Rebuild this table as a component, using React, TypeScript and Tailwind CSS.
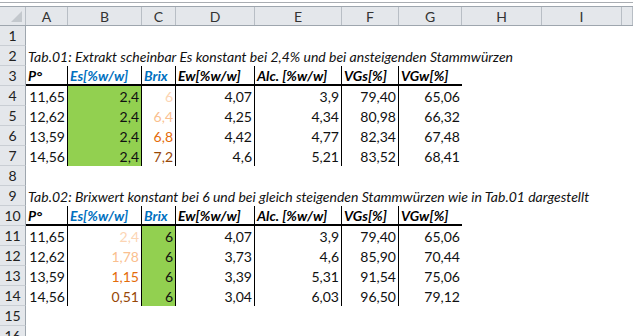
const grid = "grid grid-cols-[26px_42px_74px_34px_79px_87px_57px_63px_80px_80px_11px]";

const letters = ["A", "B", "C", "D", "E", "F", "G", "H", "I", ""];

const shades = ["text-[#fcd5b4]", "text-[#fabf8f]", "text-[#e46c0a]", "text-[#974706]"];

type Cell = { v: string; cls?: string; fill?: boolean };

const p = ["11,65", "12,62", "13,59", "14,56"];

const tab1: Cell[][] = [0, 1, 2, 3].map((i) => [
  { v: p[i] },
  { v: "2,4", fill: true },
  { v: ["6", "6,4", "6,8", "7,2"][i], cls: shades[i] },
  { v: ["4,07", "4,25", "4,42", "4,6"][i] },
  { v: ["3,9", "4,34", "4,77", "5,21"][i] },
  { v: ["79,40", "80,98", "82,34", "83,52"][i] },
  { v: ["65,06", "66,32", "67,48", "68,41"][i] },
]);

const tab2: Cell[][] = [0, 1, 2, 3].map((i) => [
  { v: p[i] },
  { v: ["2,4", "1,78", "1,15", "0,51"][i], cls: shades[i] },
  { v: "6", fill: true },
  { v: ["4,07", "3,73", "3,39", "3,04"][i] },
  { v: ["3,9", "4,6", "5,31", "6,03"][i] },
  { v: ["79,40", "85,90", "91,54", "96,50"][i] },
  { v: ["65,06", "70,44", "75,06", "79,12"][i] },
]);

const heads = [
  { v: "P°", cls: "text-black" },
  { v: "Es[%w/w]", cls: "text-[#0070c0]" },
  { v: "Brix", cls: "text-[#0070c0]" },
  { v: "Ew[%w/w]", cls: "text-black" },
  { v: "Alc. [%w/w]", cls: "text-black" },
  { v: "VGs[%]", cls: "text-black" },
  { v: "VGw[%]", cls: "text-black" },
];

const RowNum = ({ n }: { n: number }) => (
  <div className="h-[20px] bg-[#e4e7eb] border-b border-r border-b-[#c9ced4] border-r-[#9ea6ae] flex items-center justify-center text-[14px] text-[#222]">
    {n}
  </div>
);

const Empty = ({ n }: { n: number }) => (
  <div className={grid}>
    <RowNum n={n} />
    <div className="col-span-10 h-[20px]" />
  </div>
);

const Title = ({ n, text }: { n: number; text: string }) => (
  <div className={grid}>
    <RowNum n={n} />
    <div className="col-span-10 h-[20px] pl-[2px] italic whitespace-nowrap leading-[21px] text-[#111]">{text}</div>
  </div>
);

const HeadRow = ({ n }: { n: number }) => (
  <div className={grid}>
    <RowNum n={n} />
    {heads.map((h, i) => (
      <div
        key={i}
        className={`h-[20px] border-b-2 border-black pl-[2px] font-bold italic whitespace-nowrap overflow-hidden leading-[19px] ${h.cls} ${i < 6 ? "border-r" : ""}`}
      >
        {h.v}
      </div>
    ))}
    <div className="col-span-3" />
  </div>
);

const DataRow = ({ n, cells }: { n: number; cells: Cell[] }) => (
  <div className={grid}>
    <RowNum n={n} />
    {cells.map((c, i) => (
      <div
        key={i}
        className={`h-[20px] pr-[2px] text-right leading-[21px] whitespace-nowrap ${c.cls ?? "text-[#111]"} ${c.fill ? "bg-[#92d050]" : ""} ${i < 6 ? "border-r border-black" : ""}`}
      >
        {c.v}
      </div>
    ))}
    <div className="col-span-3" />
  </div>
);

export default function App() {
  return (
    <div className="w-[633px] h-[336px] overflow-hidden bg-white text-[14px] font-['Lato',sans-serif]">
      <div className="h-[6px] pt-[2px]">
        <div className="border-t border-[#a9adb2]" />
      </div>
      <div className={`${grid} h-[20px] bg-[#e4e7eb] border-t border-b border-t-[#9ea6ae] border-b-[#9ea6ae]`}>
        <div className="relative border-r border-[#b8bec5]">
          <div className="absolute right-[3px] bottom-[3px] w-0 h-0 border-l-[11px] border-l-transparent border-b-[11px] border-b-[#c3c8cd]" />
        </div>
        {letters.map((l, i) => (
          <div key={i} className="border-r border-[#b8bec5] flex items-center justify-center text-[14px] text-[#333] leading-none pt-[1px]">
            {l}
          </div>
        ))}
      </div>
      <Empty n={1} />
      <Title n={2} text="Tab.01: Extrakt scheinbar Es konstant bei 2,4% und bei ansteigenden Stammwürzen" />
      <HeadRow n={3} />
      {tab1.map((r, i) => (
        <DataRow key={i} n={4 + i} cells={r} />
      ))}
      <Empty n={8} />
      <Title n={9} text="Tab.02: Brixwert konstant bei 6 und bei gleich steigenden Stammwürzen wie in Tab.01 dargestellt" />
      <HeadRow n={10} />
      {tab2.map((r, i) => (
        <DataRow key={i} n={11 + i} cells={r} />
      ))}
      <Empty n={15} />
      <Empty n={16} />
    </div>
  );
}
